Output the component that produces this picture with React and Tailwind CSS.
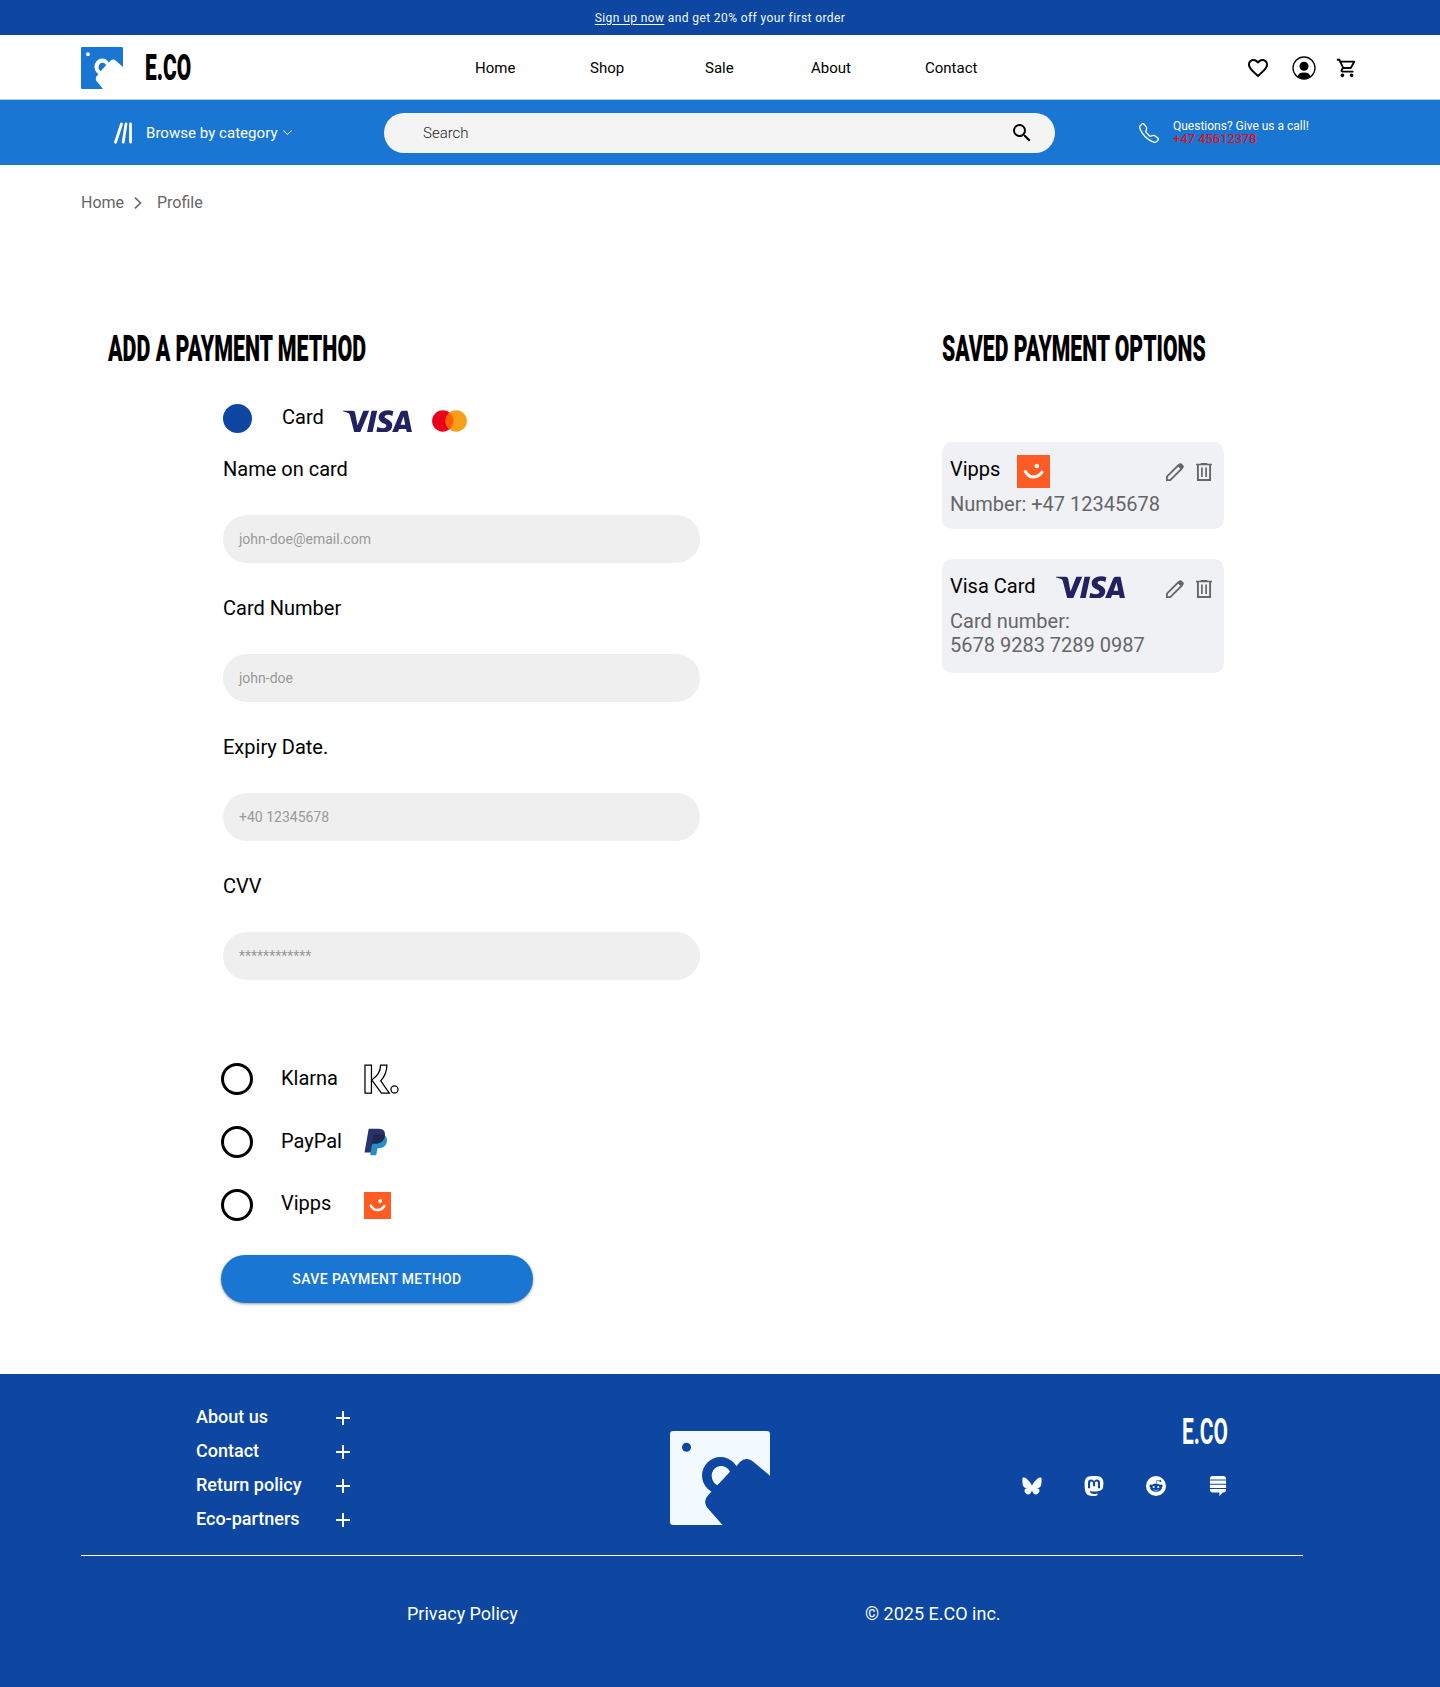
import React from "react";
import { MdFavoriteBorder, MdOutlineShoppingCart, MdSearch } from "react-icons/md";
import { BsTelephone, BsChevronDown, BsMastodon, BsReddit } from "react-icons/bs";
import { FaStackExchange } from "react-icons/fa";
import { SiVisa } from "react-icons/si";

function Logo({ className, hole }) {
  return (
    <svg viewBox="0 0 100 94" preserveAspectRatio="none" className={className}>
      <rect width="100" height="94" rx="3" fill="currentColor" />
      <g fill={hole}>
        <circle cx="16.5" cy="16.3" r="4.5" />
        <circle cx="50.5" cy="44.5" r="18.5" />
      </g>
      <path d="M47.5 54.5C43.5 52 41.7 48.5 41.7 45C41.7 39 46 35 51 35C55 35 58.5 37.500 60 41Z" fill="currentColor" />
      <path
        d="M66.7 34.700L70 31C74 27 79 27 83 30.500L100 44.700V94H52.500L37.300 76.700C34.500 73 34.500 69 37.500 65L41 61L60 41Z"
        fill={hole}
      />
    </svg>
  );
}

function Visa() {
  return (
    <span className="flex h-[22px] w-[69px] items-center justify-center overflow-hidden">
      <SiVisa className="size-[69px] shrink-0 text-[#21225f]" />
    </span>
  );
}

function Mastercard() {
  return (
    <svg viewBox="0 0 35 22" className="h-[22px] w-[35px]">
      <circle cx="10.8" cy="11" r="10.7" fill="#eb001b" />
      <circle cx="24.200" cy="11" r="10.7" fill="#f79e1b" />
      <path d="M17.500 2.700a10.700 10.700 0 0 1 0 16.600a10.700 10.700 0 0 1 0-16.600Z" fill="#ff5f00" />
    </svg>
  );
}

function VippsMark({ className }) {
  return (
    <svg viewBox="0 0 33 33" className={className}>
      <rect width="33" height="33" fill="#ff5b24" />
      <circle cx="19.800" cy="11" r="2.300" fill="#fff" />
      <path d="M8.300 16.600c2 3.600 4.800 5.500 8.200 5.500c3.700 0 6.300-1.900 8.500-5" fill="none" stroke="#fff" strokeWidth="3" strokeLinecap="round" />
    </svg>
  );
}

function Klarna() {
  return (
    <svg viewBox="-0.500 1.300 24.900 21.300" className="h-[30px] w-[35px]" fill="none" stroke="#000" strokeWidth="0.9">
      <path d="M0.200 2h4.600v20H0.200z" />
      <path d="M11.300 2h4.500c0 4.200-1.600 8.100-4.400 11.300L17.500 22h-5.600L5 12.600C9 10 11.300 6.300 11.300 2z" />
      <circle cx="21.200" cy="19.400" r="2.500" />
    </svg>
  );
}

function Paypal() {
  return (
    <svg viewBox="0 0 24 28" className="h-7 w-6">
      <path d="M9 7.500H20.500C22.700 8.700 23.400 11 22.800 14C21.900 18.300 18.900 20.200 15 20.200H13.500L12.200 27.300H6.200L6.600 24Z" fill="#2790c3" />
      <path d="M4.700 0.700H14.500C19.500 0.700 21.700 3.500 20.800 8C19.900 13 16.500 15.600 11.500 15.600H8.400L6.700 24.400H0.500Z" fill="#27346a" />
      <path d="M9.300 7.300C9.600 6.700 10.200 6.500 11 6.500H17.500C18.800 6.500 20 6.800 20.900 7.300C20 13 16.500 15.600 11.500 15.600H7.800Z" fill="#1f264f" />
    </svg>
  );
}

function Bluesky() {
  return (
    <svg viewBox="0 0 600 530" className="h-[18px] w-5" fill="currentColor">
      <path d="m135.720 44.030c66.496 49.921 138.020 151.140 164.280 205.460 26.262-54.316 97.782-155.540 164.280-205.460 47.980-36.021 125.720-63.892 125.720 24.795 0 17.712-10.155 148.790-16.111 170.070-20.703 73.984-96.144 92.854-163.250 81.433 117.300 19.964 147.140 86.092 82.697 152.220-122.390 125.590-175.910-31.511-189.630-71.766-2.514-7.380-3.690-10.832-3.708-7.896-0.017-2.936-1.194 0.516-3.708 7.896-13.714 40.255-67.233 197.360-189.630 71.766-64.444-66.128-34.605-132.260 82.697-152.220-67.108 11.421-142.550-7.450-163.250-81.433-5.956-21.282-16.111-152.360-16.111-170.070 0-88.687 77.742-60.816 125.720-24.795z" />
    </svg>
  );
}

function Account() {
  return (
    <svg viewBox="0 0 24 24" className="size-6">
      <circle cx="12" cy="12" r="11" fill="none" stroke="#000" strokeWidth="1.300" />
      <circle cx="12" cy="10.300" r="4.500" />
      <path d="M5.500 20.500C6 17.800 8.500 16.400 12 16.400s6 1.400 6.500 4.100C16.800 22 14.600 23 12 23s-4.800-1-6.500-2.500Z" />
    </svg>
  );
}

function Pencil() {
  return (
    <svg viewBox="0 0 18 18" className="size-[18px] text-[#666]">
      <path d="M0.900 17.100V13.700L12.300 2.300L15.700 5.700L4.300 17.100Z" fill="none" stroke="currentColor" strokeWidth="1.800" />
      <path d="M11.300 2.600L13.300 0.600Q14.400 -0.300 15.500 0.600L17.400 2.500Q18.300 3.600 17.400 4.700L15.400 6.700Z" fill="currentColor" />
    </svg>
  );
}

function Trash() {
  return (
    <svg viewBox="0 0 16 18" className="h-[18px] w-4 text-[#666]" fill="none" stroke="currentColor">
      <path d="M0 1.500H16M4.700 0.700H11.300" strokeWidth="1.700" />
      <path d="M1.900 2V17H14.100V2" strokeWidth="1.900" />
      <path d="M5.900 4.500V14M10.100 4.500V14" strokeWidth="1.700" />
    </svg>
  );
}

function Field({ label, placeholder }) {
  return (
    <div className="mb-[35px] flex h-[104px] flex-col justify-between">
      <label className="text-xl leading-5">{label}</label>
      <div className="flex h-12 w-[477px] items-center rounded-full bg-[#efefef] px-4 text-sm text-[#999]">{placeholder}</div>
    </div>
  );
}

function Option({ name, children }) {
  return (
    <div className="flex h-[62.700px] items-center">
      <span className="size-8 rounded-full border-3 border-black" />
      <span className="ml-[28px] w-[83px] pb-[3px] text-xl">{name}</span>
      {children}
    </div>
  );
}

function Saved({ name, mark, className, children }) {
  return (
    <div className={"rounded-[10px] bg-[#f0f1f5] px-2 " + className}>
      <div className="flex h-[34px] items-center">
        <span className="pb-1 text-xl">{name}</span>
        {mark}
        <span className="mt-0.5 mr-1 ml-auto flex gap-3">
          <Pencil />
          <Trash />
        </span>
      </div>
      <p className="mt-1 text-xl leading-6 text-[#666]">{children}</p>
    </div>
  );
}

export default function App() {
  return (
    <div className="flex h-[1687px] w-[1440px] flex-col overflow-hidden bg-white font-['Roboto',sans-serif] text-black">
      <div className="flex h-[35px] items-center justify-center bg-[#0d47a1] text-xs tracking-[0.4px] text-[#f3faff]">
        <span className="underline underline-offset-2">Sign up now</span>
        <span className="whitespace-pre"> and get 20% off your first order</span>
      </div>

      <header className="flex h-[65px] items-center border-b border-[#b8cbe0] pt-0.5 pl-[81px]">
        <Logo className="size-[42px] text-[#1976d2]" hole="#fff" />
        <span className="ml-[22px] w-[300px] shrink-0">
          <span className="inline-block origin-left scale-x-[0.58] text-4xl font-black">E.CO</span>
        </span>
        <nav className="ml-[30px] flex w-[735px] shrink-0 text-[15px]">
          <a className="w-[115px]">Home</a>
          <a className="w-[115px]">Shop</a>
          <a className="w-[106px]">Sale</a>
          <a className="w-[114px]">About</a>
          <a>Contact</a>
        </nav>
        <div className="ml-9 flex items-center">
          <MdFavoriteBorder className="size-6" />
          <span className="ml-[22px]"><Account /></span>
          <MdOutlineShoppingCart className="ml-5 size-[22px]" />
        </div>
      </header>

      <div className="flex h-[65px] shrink-0 items-center bg-[#1976d2] pl-[114px] text-white">
        <svg viewBox="0 0 18 22" className="h-[22px] w-[18px]" stroke="#fff" strokeWidth="2.800" strokeLinecap="round">
          <path d="M1.500 20.200L7.500 2M9.200 20.200L12 2M16.500 20.200V2" />
        </svg>
        <span className="ml-[14px] w-[136px] pt-0.5 text-[15px] tracking-[0.04px]">Browse by category</span>
        <BsChevronDown className="size-[11px]" />
        <div className="ml-[91px] flex h-10 w-[671px] shrink-0 items-center justify-between rounded-full bg-[#f4f4f4] pr-[21px] pl-[39px] text-[#222]">
          <span className="pt-0.5 text-[15px] font-light">Search</span>
          <MdSearch className="size-6 text-black" />
        </div>
        <BsTelephone className="ml-[84px] size-5" />
        <div className="ml-[14px] text-xs leading-[13px]">
          <p>Questions? Give us a call!</p>
          <p className="text-[13px]/3 text-[#ff0000]">+47 45612378</p>
        </div>
      </div>

      <div className="mt-7 flex h-5 items-center pl-[81px] text-base text-[#666]">
        <span className="w-[53px]">Home</span>
        <svg viewBox="0 0 8 12" className="h-3 w-2" fill="none" stroke="currentColor" strokeWidth="1.600">
          <path d="M1 0.700L6.500 6L1 11.300" />
        </svg>
        <span className="ml-[15px]">Profile</span>
      </div>

      <main className="flex h-[1161px] shrink-0 pt-[116px] pl-[108px]">
        <section className="w-[834px]">
          <h1 className="h-10 text-4xl leading-10 font-black whitespace-nowrap">
            <span className="inline-block origin-left scale-x-[0.595]">ADD A PAYMENT METHOD</span>
          </h1>
          <div className="ml-[115px]">
            <div className="mt-[34px] flex h-[30px] items-center">
              <span className="size-[29px] rounded-full bg-[#0d47a1]" />
              <span className="ml-[30px] w-[61px] pb-[3px] text-xl">Card</span>
              <span className="mt-[6px] flex gap-5">
                <Visa />
                <Mastercard />
              </span>
            </div>
            <div className="mt-[26px]">
              <Field label="Name on card" placeholder="john-doe@email.com" />
              <Field label="Card Number" placeholder="john-doe" />
              <Field label="Expiry Date." placeholder="+40 12345678" />
              <Field label="CVV" placeholder="************" />
            </div>
          </div>
          <div className="mt-[68px] ml-[113px]">
            <Option name="Klarna"><Klarna /></Option>
            <Option name="PayPal"><Paypal /></Option>
            <Option name="Vipps"><VippsMark className="mt-0.5 size-[27px]" /></Option>
            <button className="mt-[19px] flex h-12 w-[312px] items-center justify-center rounded-full bg-[#1976d2] text-sm font-medium tracking-[0.4px] text-white shadow-[0_1px_3px_rgba(0,0,0,0.4)]">
              SAVE PAYMENT METHOD
            </button>
          </div>
        </section>

        <section className="w-[282px]">
          <h2 className="h-10 text-4xl leading-10 font-black whitespace-nowrap">
            <span className="inline-block origin-left scale-x-[0.588]">SAVED PAYMENT OPTIONS</span>
          </h2>
          <Saved name="Vipps" className="mt-[73px] h-[87px] pt-[12px]" mark={<VippsMark className="ml-[17px] size-[33px]" />}>
            Number: +47 12345678
          </Saved>
          <Saved name="Visa Card" className="mt-[30px] h-[114px] pt-[12px]" mark={<span className="mb-0.5 ml-5"><Visa /></span>}>
            Card number:
            <br />
            5678 9283 7289 0987
          </Saved>
        </section>
      </main>

      <footer className="flex grow flex-col bg-[#0d47a1] text-white">
        <div className="flex h-[181px]">
          <ul className="mt-[26px] ml-[196px] w-[154px] text-lg font-medium">
            {["About us", "Contact", "Return policy", "Eco-partners"].map((t) => (
              <li key={t} className="flex h-[34px] items-center justify-between">
                {t}
                <svg viewBox="0 0 14 14" className="mt-0.5 size-3.5" stroke="#fff" strokeWidth="2">
                  <path d="M0 7H14M7 0V14" />
                </svg>
              </li>
            ))}
          </ul>
          <Logo className="mt-[57px] ml-[320px] h-[94px] w-[100px] text-[#f3faff]" hole="#0d47a1" />
          <div className="mt-[38px] ml-[252px] w-[206px]">
            <div className="flex h-10 w-[206px] items-center justify-end">
              <span className="w-[46px] text-4xl">
                <span className="inline-block origin-left scale-x-[0.580] font-bold">E.CO</span>
              </span>
            </div>
            <div className="mt-6 flex items-center justify-between">
              <Bluesky />
              <BsMastodon className="size-5" />
              <BsReddit className="size-5" />
              <FaStackExchange className="h-5 w-[20px]" />
            </div>
          </div>
        </div>
        <div className="ml-[81px] h-px w-[1222px] bg-white" />
        <div className="mt-[44px] flex pl-[407px] text-lg">
          <span className="w-[458px]">Privacy Policy</span>
          <span>© 2025 E.CO inc.</span>
        </div>
      </footer>
    </div>
  );
}
